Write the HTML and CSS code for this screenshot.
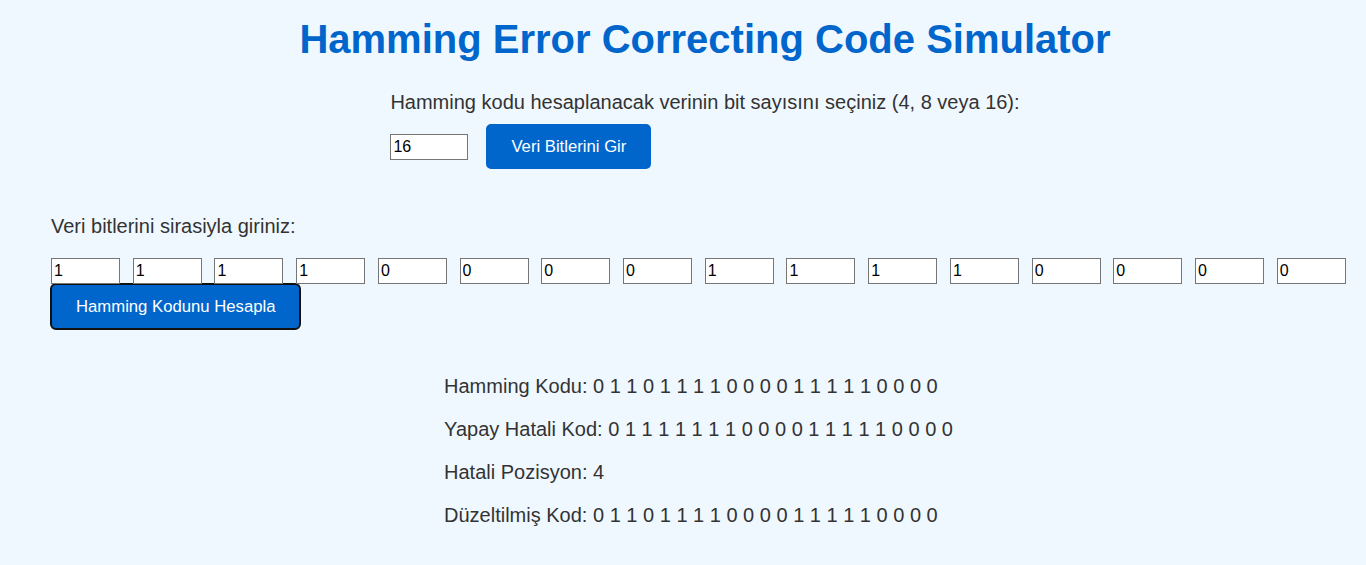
FILE: index.html
```html
<!DOCTYPE html>
<html lang="tr">
<head>
<meta charset="utf-8">
<title>Hamming Error Correcting Code Simulator</title>
<link rel="stylesheet" href="styles.css">
</head>
<body>
<div class="page">
  <header class="top">
    <h1 class="title">Hamming Error Correcting Code Simulator</h1>
    <div class="setup">
      <p class="prompt">Hamming kodu hesaplanacak verinin bit sayısını seçiniz (4, 8 veya 16):</p>
      <div class="setup-row">
        <input class="count-input" type="text" value="16">
        <button class="btn btn-enter" type="button">Veri Bitlerini Gir</button>
      </div>
    </div>
  </header>

  <section class="data">
    <p class="data-label">Veri bitlerini sirasiyla giriniz:</p>
    <div class="bits">
      <input class="bit" type="text" value="1">
      <input class="bit" type="text" value="1">
      <input class="bit" type="text" value="1">
      <input class="bit" type="text" value="1">
      <input class="bit" type="text" value="0">
      <input class="bit" type="text" value="0">
      <input class="bit" type="text" value="0">
      <input class="bit" type="text" value="0">
      <input class="bit" type="text" value="1">
      <input class="bit" type="text" value="1">
      <input class="bit" type="text" value="1">
      <input class="bit" type="text" value="1">
      <input class="bit" type="text" value="0">
      <input class="bit" type="text" value="0">
      <input class="bit" type="text" value="0">
      <input class="bit" type="text" value="0">
    </div>
    <button class="btn btn-calc" type="button">Hamming Kodunu Hesapla</button>
  </section>

  <section class="results">
    <div class="results-box">
      <p class="result">Hamming Kodu: 0 1 1 0 1 1 1 1 0 0 0 0 1 1 1 1 1 0 0 0 0</p>
      <p class="result">Yapay Hatali Kod: 0 1 1 1 1 1 1 1 0 0 0 0 1 1 1 1 1 0 0 0 0</p>
      <p class="result">Hatali Pozisyon: 4</p>
      <p class="result">Düzeltilmiş Kod: 0 1 1 0 1 1 1 1 0 0 0 0 1 1 1 1 1 0 0 0 0</p>
    </div>
  </section>
</div>
</body>
</html>
```
FILE: styles.css
```css
html, body {
  margin: 0;
  padding: 0;
  background: #f0f8ff;
}
body {
  font-family: "Liberation Sans", Arial, sans-serif;
  color: #333;
}
.page {
  padding: 16px 20px 20px 51px;
}
.top {
  padding-left: 13px;
  text-align: center;
}
.title {
  margin: 0;
  font-size: 40px;
  font-weight: bold;
  color: #0066cc;
  line-height: 46px;
}
.setup {
  display: inline-block;
  text-align: left;
  margin-top: 29px;
}
.prompt {
  margin: 0;
  font-size: 20px;
  line-height: 23px;
}
.setup-row {
  display: flex;
  align-items: center;
  gap: 18px;
  margin-top: 10px;
}
input {
  font-family: "Liberation Sans", Arial, sans-serif;
  font-size: 16px;
  color: #000;
  background: #fff;
  border: 1px solid #767676;
  padding: 1px 2px;
  height: 26px;
  box-sizing: border-box;
  margin: 0;
}
.count-input {
  width: 78px;
}
.btn {
  font-family: "Liberation Sans", Arial, sans-serif;
  font-size: 16.7px;
  color: #fff;
  background: #0066cc;
  border: 2px solid #0066cc;
  border-radius: 5px;
  padding: 11px 23px;
  line-height: 19px;
  cursor: pointer;
}
.data {
  margin-top: 46px;
}
.data-label {
  margin: 0;
  font-size: 20px;
  line-height: 23px;
}
.bits {
  display: flex;
  justify-content: space-between;
  margin-top: 20px;
}
.bit {
  width: 69px;
}
.btn-calc {
  display: block;
  margin-top: -1px;
  margin-left: -1px;
  border-color: #111;
  border-radius: 6px;
  padding: 12px 24px;
}
.results {
  margin-top: 45px;
  text-align: center;
}
.results-box {
  display: inline-block;
  text-align: left;
}
.result {
  margin: 0 0 20px;
  font-size: 20px;
  line-height: 23px;
}
```
